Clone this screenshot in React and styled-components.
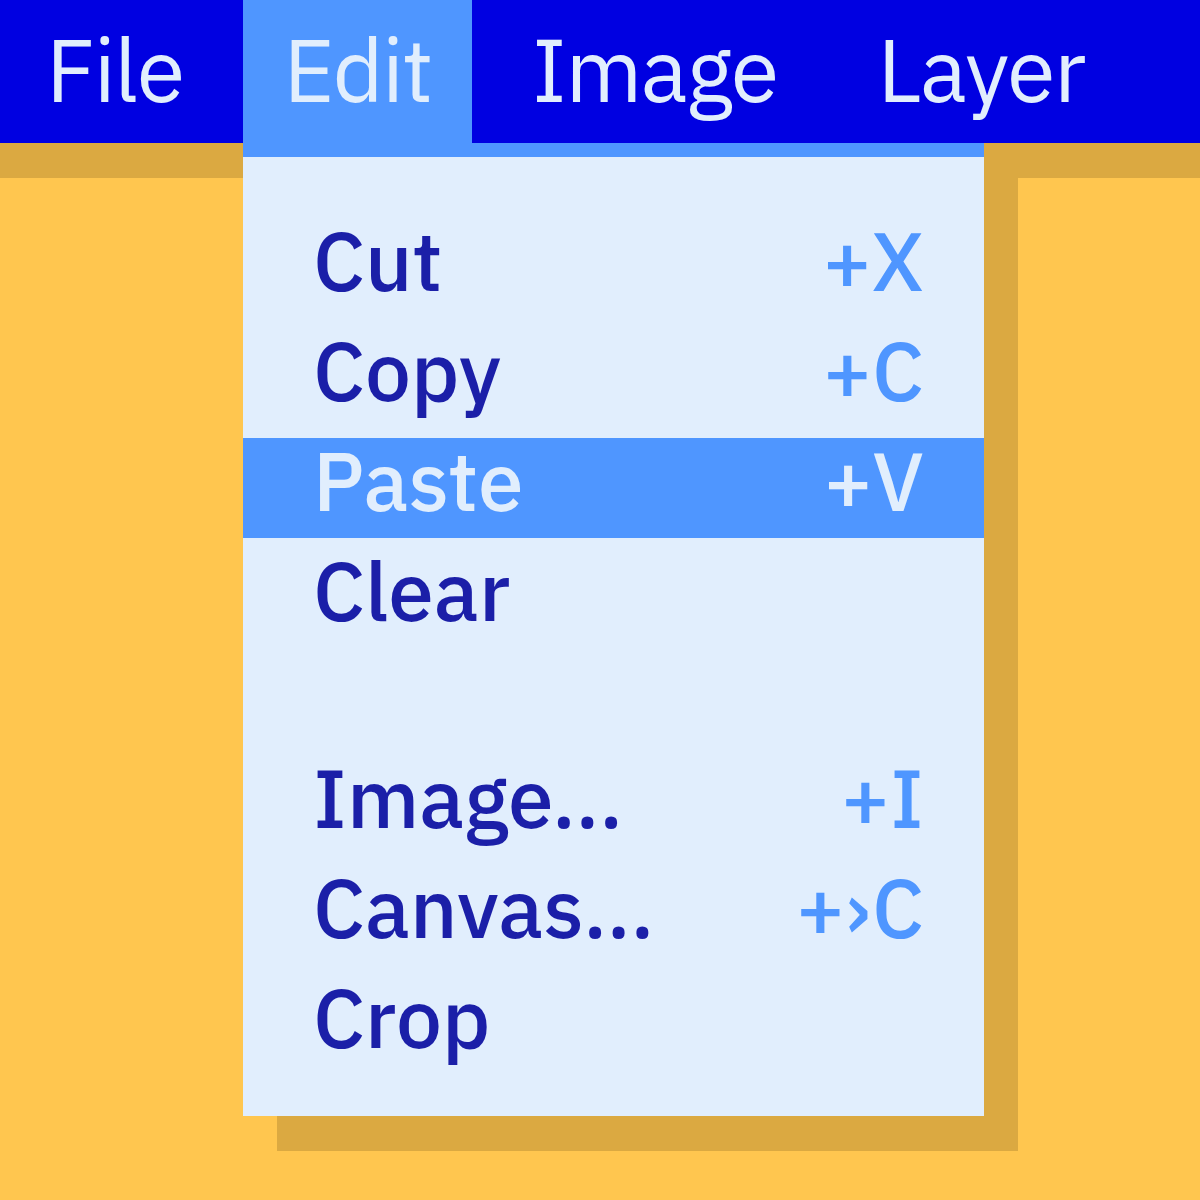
import styled, { createGlobalStyle } from "styled-components";

const GlobalStyle = createGlobalStyle`
  html, body {
    margin: 0;
    padding: 0;
    background: #ffc64f;
  }
  body {
    width: 1200px;
    height: 1200px;
    overflow: hidden;
    font-family: "IBM Plex Sans", "Noto Sans", "Open Sans", sans-serif;
  }
`;

const Page = styled.div`
  position: relative;
  width: 1200px;
  height: 1200px;
`;

const MenuBar = styled.nav`
  display: flex;
  gap: 20px;
  height: 143px;
  padding-left: 6px;
  background: #0000e1;
  box-shadow: 0 35px 0 #dba941;
`;

const MenuTitle = styled.div`
  display: flex;
  align-items: center;
  box-sizing: border-box;
  padding: 0 40px 6px;
  height: 100%;
  font-size: 88px;
  letter-spacing: -1.5px;
  color: #e1eefd;
  background: ${(p) => (p.open ? "#4f96ff" : "transparent")};
`;

const Dropdown = styled.div`
  position: absolute;
  top: 143px;
  left: 243px;
  z-index: 2;
  width: 741px;
  height: 973px;
  box-sizing: border-box;
  border-top: 14px solid #4f96ff;
  padding: 61px 0 0;
  background: #e1eefd;
  box-shadow: 34px 35px 0 #dba941;
  display: flex;
  flex-direction: column;
  gap: 10px;
`;

const Item = styled.div`
  display: flex;
  align-items: center;
  justify-content: space-between;
  box-sizing: border-box;
  height: 100px;
  padding: 0 60px 16px 70px;
  font-size: 82px;
  font-weight: 500;
  color: ${(p) => (p.active ? "#e1eefd" : "#1b1fa8")};
  background: ${(p) => (p.active ? "#4f96ff" : "transparent")};
`;

const Shortcut = styled.span`
  color: ${(p) => (p.active ? "#e1eefd" : "#4f96ff")};
`;

const Spacer = styled.div`
  height: 87px;
`;

const groups = [
  [
    { label: "Cut", key: "+X" },
    { label: "Copy", key: "+C" },
    { label: "Paste", key: "+V", active: true },
    { label: "Clear" },
  ],
  [
    { label: "Image...", key: "+I" },
    { label: "Canvas...", key: "+\u203aC" },
    { label: "Crop" },
  ],
];

const App = () => {
  const rows = [];
  groups.forEach((group, gi) => {
    if (gi > 0) rows.push(<Spacer key={"spacer" + gi} />);
    group.forEach((it) =>
      rows.push(
        <Item key={it.label} active={it.active}>
          <span>{it.label}</span>
          {it.key && <Shortcut active={it.active}>{it.key}</Shortcut>}
        </Item>
      )
    );
  });

  return (
    <Page>
      <GlobalStyle />
      <MenuBar>
        <MenuTitle>File</MenuTitle>
        <MenuTitle open>Edit</MenuTitle>
        <MenuTitle>Image</MenuTitle>
        <MenuTitle>Layer</MenuTitle>
      </MenuBar>
      <Dropdown>{rows}</Dropdown>
    </Page>
  );
};

export default App;
